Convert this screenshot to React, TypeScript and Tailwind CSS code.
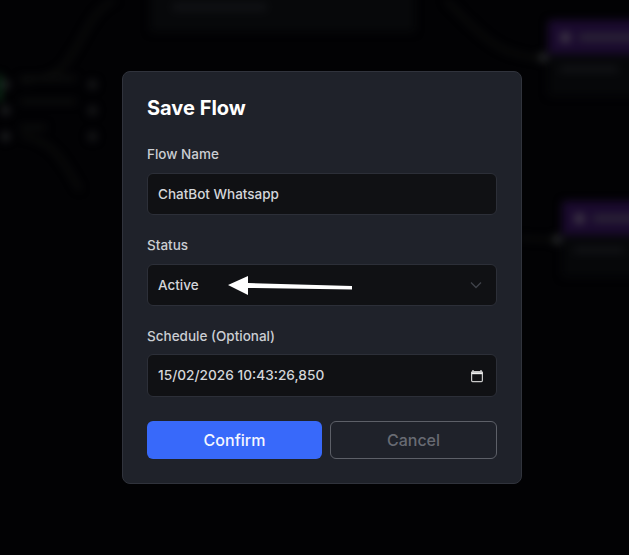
import React from "react";

function FlowNode({ pos, width, bar }: { pos: string; width: string; bar: string }) {
  return (
    <div className={`absolute ${pos} ${width}`}>
      <div className="h-[34px] bg-[#1a0a2e] rounded-t flex items-center pl-3 gap-2">
        <div className="w-[11px] h-[11px] rounded-full bg-[#3d3645]" />
        <div className="w-[60px] h-[7px] bg-[#2c2636]" />
      </div>
      <div className="h-[42px] bg-[#060709] rounded-b pl-3 pt-3">
        <div className={`${bar} h-[6px] bg-[#131417]`} />
      </div>
    </div>
  );
}

function Dot({ pos, color = "bg-[#202224]" }: { pos: string; color?: string }) {
  return <div className={`absolute ${pos} ${color} w-[9px] h-[9px] rounded-full`} />;
}

function Field({ label, className, children }: { label: string; className: string; children: React.ReactNode }) {
  return (
    <div className={className}>
      <div className="text-[13.5px] font-medium leading-5 text-[#cbced3]">{label}</div>
      {children}
    </div>
  );
}

export default function App() {
  return (
    <div className="relative w-[629px] h-[555px] overflow-hidden bg-[#020204] font-['Inter',sans-serif] flex items-center pl-[122px]">
      <div className="absolute inset-0 blur-[4px]">
        <svg className="absolute inset-0" width="629" height="555" fill="none" stroke="#10110e" strokeWidth="3">
          <path d="M22 82 C60 76 62 70 76 48 C88 28 95 4 125 -4" />
          <path d="M22 136 C55 140 65 165 80 190" />
          <path d="M440 -5 C470 20 490 58 544 58" />
          <path d="M520 238 L558 240" />
        </svg>
        <div className="absolute left-[150px] top-[-12px] w-[265px] h-[44px] bg-[#07080a] rounded" />
        <div className="absolute left-[172px] top-[3px] w-[95px] h-[8px] bg-[#111215] rounded" />
        <div className="absolute left-[20px] top-[76px] w-[56px] h-[5px] bg-[#0c0d0d]" />
        <div className="absolute left-[20px] top-[99px] w-[56px] h-[5px] bg-[#0c0d0d]" />
        <div className="absolute left-[20px] top-[125px] w-[26px] h-[5px] bg-[#0c0d0d]" />
        <div className="absolute left-[-4px] top-[74px] w-[6px] h-[28px] bg-[#0b2e16] rounded" />
        <Dot pos="left-[1px] top-[80px]" />
        <Dot pos="left-[1px] top-[106px]" />
        <Dot pos="left-[1px] top-[132px]" />
        <Dot pos="left-[88px] top-[80px]" color="bg-[#191a1c]" />
        <Dot pos="left-[88px] top-[106px]" color="bg-[#191a1c]" />
        <Dot pos="left-[88px] top-[132px]" color="bg-[#191a1c]" />
        <FlowNode pos="left-[548px] top-[20px]" width="w-[110px]" bar="w-[58px]" />
        <FlowNode pos="left-[562px] top-[201px]" width="w-[100px]" bar="w-[50px]" />
        <Dot pos="left-[539px] top-[53px]" color="bg-[#2a2c2e]" />
        <Dot pos="left-[553px] top-[235px]" color="bg-[#2a2c2e]" />
      </div>

      <div className="relative w-[400px] h-[413px] rounded-lg border border-[#30333c] bg-[#1f222a] px-6 pt-[22px]">
        <h2 className="text-xl leading-7 font-bold text-white">Save Flow</h2>

        <Field label="Flow Name" className="mt-[22px]">
          <div className="mt-[9px] h-[42px] rounded-md border border-[#2c2f38] bg-[#101114] flex items-center px-[10px] text-[13.5px] font-medium text-[#d4d6da]">
            ChatBot Whatsapp
          </div>
        </Field>

        <Field label="Status" className="mt-[20px]">
          <div className="mt-[9px] h-[42px] rounded-md border border-[#2c2f38] bg-[#101114] flex items-center justify-between pl-[10px] pr-[14px] text-[13.5px] font-medium text-[#d4d6da]">
            Active
            <svg width="12" height="8" viewBox="0 0 12 8" fill="none" stroke="#3f424a" strokeWidth="1.3">
              <path d="M1 1.5 L6 6.5 L11 1.5" />
            </svg>
          </div>
        </Field>

        <Field label="Schedule (Optional)" className="mt-[20px]">
          <div className="mt-[8px] h-[43px] rounded-md border border-[#2c2f38] bg-[#101114] flex items-center justify-between pl-[10px] pr-[12px] text-[13.7px] font-medium text-[#d4d6da]">
            15/02/2026 10:43:26,850
            <svg width="14" height="14" viewBox="0 0 14 14" fill="none">
              <path d="M3 1v2M11 1v2" stroke="#e8e8e8" strokeWidth="1.2" />
              <rect x="1.6" y="2.6" width="10.8" height="10" rx="1" stroke="#c8c8c8" strokeWidth="1.2" />
              <path d="M1.6 4.2h10.8" stroke="#f0f0f0" strokeWidth="2" />
            </svg>
          </div>
        </Field>

        <div className="mt-6 flex gap-2">
          <button className="w-[175px] h-[38px] rounded-md bg-[#3869fa] text-base font-medium text-[#f4f6ff]">Confirm</button>
          <button className="w-[167px] h-[38px] rounded-md border border-[#5d6068] text-base font-medium text-[#686b73]">Cancel</button>
        </div>
      </div>

      <svg className="absolute left-[222px] top-[270px]" width="136" height="30" viewBox="0 0 136 30" fill="white">
        <path d="M6 15 L26 6 L26 13 L130 16 L130 19.5 L26 18 L26 25 Z" />
      </svg>
    </div>
  );
}
